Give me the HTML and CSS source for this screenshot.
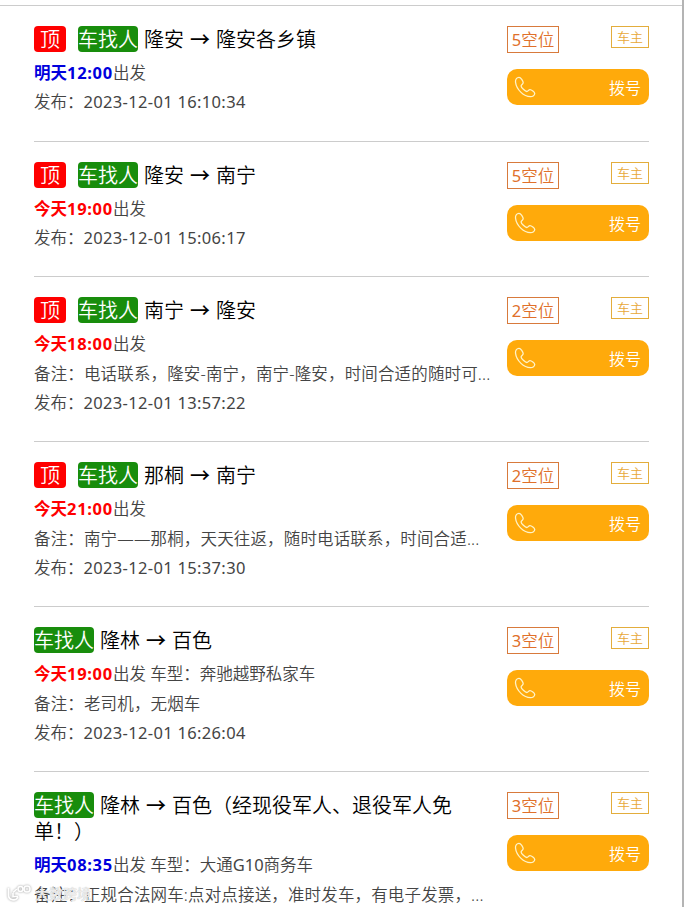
FILE: index.html
```
<!DOCTYPE html>
<html lang="zh-CN">
<head>
    <meta charset="UTF-8">
    <meta name="viewport" content="width=device-width, initial-scale=1.0">
    <title>拼车信息</title>
    <link rel="stylesheet" href="styles.css">
</head>
<body>
    <svg width="0" height="0" class="sprite">
        <symbol id="phone" viewBox="0 0 22 22">
            <path d="M5 1.3C3 1.5 1.3 3.4 1.5 6c.4 3.600 2.400 7.400 5.500 10.400 3 3 6.500 4.300 9.500 4.300 2.400 0 4.300-1.500 4.200-3.300 0-1.300-3.300-3.800-4.700-3.800-1.500 0-1.900 1.900-3.200 1.900-1.500 0-5.700-4.100-5.700-5.600 0-1.300 2-1.600 2.100-3.100C9.200 5.300 6.700 1.200 5 1.300z"/>
        </symbol>
    </svg>

    <div class="page">
        <div class="list">
            <div class="item">
                <div class="info">
                    <div class="title"><span class="top">顶</span><span class="type">车找人</span> 隆安 <i>→</i> 隆安各乡镇</div>
                    <div class="line"><b class="tomorrow">明天<span>12:00</span></b>出发</div>
                    <div class="line">发布：<span class="date">2023-12-01 16:10:34</span></div>
                </div>
                <div class="side">
                    <div class="tags"><span class="seats"><em>5</em>空位</span><span class="role">车主</span></div>
                    <a class="call"><svg><use href="#phone"/></svg>拨号</a>
                </div>
            </div>

            <div class="item">
                <div class="info">
                    <div class="title"><span class="top">顶</span><span class="type">车找人</span> 隆安 <i>→</i> 南宁</div>
                    <div class="line"><b class="today">今天<span>19:00</span></b>出发</div>
                    <div class="line">发布：<span class="date">2023-12-01 15:06:17</span></div>
                </div>
                <div class="side">
                    <div class="tags"><span class="seats"><em>5</em>空位</span><span class="role">车主</span></div>
                    <a class="call"><svg><use href="#phone"/></svg>拨号</a>
                </div>
            </div>

            <div class="item">
                <div class="info">
                    <div class="title"><span class="top">顶</span><span class="type">车找人</span> 南宁 <i>→</i> 隆安</div>
                    <div class="line"><b class="today">今天<span>18:00</span></b>出发</div>
                    <div class="line remark">备注：电话联系，隆安-南宁，南宁-隆安，时间合适的随时可...</div>
                    <div class="line">发布：<span class="date">2023-12-01 13:57:22</span></div>
                </div>
                <div class="side">
                    <div class="tags"><span class="seats"><em>2</em>空位</span><span class="role">车主</span></div>
                    <a class="call"><svg><use href="#phone"/></svg>拨号</a>
                </div>
            </div>

            <div class="item">
                <div class="info">
                    <div class="title"><span class="top">顶</span><span class="type">车找人</span> 那桐 <i>→</i> 南宁</div>
                    <div class="line"><b class="today">今天<span>21:00</span></b>出发</div>
                    <div class="line remark">备注：南宁——那桐，天天往返，随时电话联系，时间合适...</div>
                    <div class="line">发布：<span class="date">2023-12-01 15:37:30</span></div>
                </div>
                <div class="side">
                    <div class="tags"><span class="seats"><em>2</em>空位</span><span class="role">车主</span></div>
                    <a class="call"><svg><use href="#phone"/></svg>拨号</a>
                </div>
            </div>

            <div class="item">
                <div class="info">
                    <div class="title"><span class="type">车找人</span> 隆林 <i>→</i> 百色</div>
                    <div class="line"><b class="today">今天<span>19:00</span></b>出发 车型：奔驰越野私家车</div>
                    <div class="line remark">备注：老司机，无烟车</div>
                    <div class="line">发布：<span class="date">2023-12-01 16:26:04</span></div>
                </div>
                <div class="side">
                    <div class="tags"><span class="seats"><em>3</em>空位</span><span class="role">车主</span></div>
                    <a class="call"><svg><use href="#phone"/></svg>拨号</a>
                </div>
            </div>

            <div class="item">
                <div class="info">
                    <div class="title"><span class="type">车找人</span> 隆林 <i>→</i> 百色（经现役军人、退役军人免单！）</div>
                    <div class="line"><b class="tomorrow">明天<span>08:35</span></b>出发 车型：大通<em>G10</em>商务车</div>
                    <div class="line remark">备注：正规合法网车:点对点接送，准时发车，有电子发票，...</div>
                </div>
                <div class="side">
                    <div class="tags"><span class="seats"><em>3</em>空位</span><span class="role">车主</span></div>
                    <a class="call"><svg><use href="#phone"/></svg>拨号</a>
                </div>
            </div>
        </div>

        <div class="watermark">
            <svg width="26" height="18" viewBox="0 0 26 18">
                <path d="M2.500 4v6.500a5 5 0 0 0 9.500 2.500M7 8.500L11 5M7 9v3.500h5"/>
                <circle cx="14.500" cy="5" r="2.500"/>
                <circle cx="21" cy="5" r="3"/>
            </svg>
            <span>大数跨境</span>
        </div>
    </div>
</body>
</html>
```

FILE: styles.css
```
* {
    box-sizing: border-box;
}

body, html {
    margin: 0;
    padding: 0;
    height: 100%;
    overflow: hidden;
    background: #fff;
}

body {
    font-family: "Noto Sans", "Noto Sans CJK SC", sans-serif;
    font-weight: 350;
    font-size: 16.5px;
    color: #444;
}

em {
    font-style: normal;
    font-weight: 400;
}

.sprite {
    position: absolute;
}

.page {
    position: relative;
    width: 684px;
    height: 907px;
    padding-top: 5px;
    border-right: 2px solid #b4b4b4;
    overflow: hidden;
}

.list {
    padding: 0 33px 0 34px;
    border-top: 1px solid #ccc;
}

.item {
    display: flex;
    justify-content: space-between;
    padding: 20px 0 24.5px;
    border-bottom: 1px solid #ccc;
}

/* Left part */
.info {
    width: 460px;
}

.title {
    margin-bottom: 5px;
    font-size: 20px;
    line-height: 26px;
    color: #000;
    word-spacing: 0.8px;
}

.title i {
    font-family: "Noto Sans CJK SC", sans-serif;
    font-style: normal;
    font-weight: 500;
}

.top, .type {
    display: inline-block;
    height: 26px;
    border-radius: 4px;
    line-height: 27px;
    color: #fff;
    vertical-align: top;
}

.top {
    margin-right: 12px;
    padding: 0 6px;
    background: #f00;
}

.type {
    background: #188d0c;
}

.line {
    height: 29px;
    line-height: 29px;
    white-space: nowrap;
}

.remark {
    height: 29.5px;
    line-height: 31px;
    letter-spacing: 0.15px;
}

.line b {
    font-weight: 700;
}

.line b span {
    letter-spacing: 0.7px;
}

.date {
    font-weight: 400;
    letter-spacing: 0.33px;
}

.today {
    color: #f00;
}

.tomorrow {
    color: #00d;
}

/* Right part */
.side {
    width: 142px;
}

.tags {
    display: flex;
    justify-content: space-between;
    align-items: flex-start;
}

.seats {
    width: 52px;
    height: 27px;
    border: 1px solid #d87a3c;
    line-height: 25px;
    text-align: center;
    color: #e0702a;
}

.role {
    width: 38px;
    height: 22px;
    border: 1px solid #e3ad3c;
    font-size: 13px;
    line-height: 20px;
    text-align: center;
    color: #e8a838;
}

.call {
    display: flex;
    justify-content: space-between;
    align-items: center;
    height: 36px;
    margin-top: 16px;
    padding: 0 8px 0 7px;
    border-radius: 10px;
    background: #ffaa0b;
    color: #fff;
    font-size: 16px;
}

.call svg {
    width: 22px;
    height: 22px;
    fill: none;
    stroke: #fff3c8;
    stroke-width: 1.3;
}

/* Bottom mark */
.watermark {
    position: absolute;
    left: 6px;
    top: 882px;
    display: flex;
    align-items: center;
    gap: 3px;
    height: 22px;
    font-size: 14px;
    font-weight: 500;
    color: rgba(255, 255, 255, 0.75);
    text-shadow: 0 0 1px #aaa;
}

.watermark svg {
    fill: none;
    stroke: #fff;
    stroke-width: 1.6;
    filter: drop-shadow(0 0 1px #999);
}
```
